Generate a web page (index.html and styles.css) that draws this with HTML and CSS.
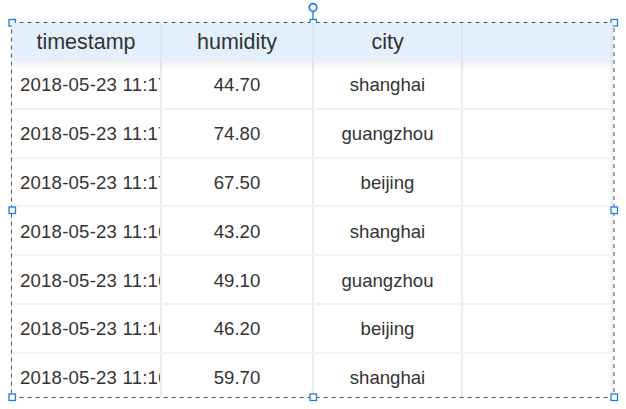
FILE: index.html
```html
<!DOCTYPE html>
<html>
<head>
<meta charset="utf-8">
<link rel="stylesheet" href="styles.css">
</head>
<body>
<div class="canvas">
  <div class="table">
    <div class="row head">
      <div class="cell">timestamp</div>
      <div class="cell">humidity</div>
      <div class="cell">city</div>
      <div class="cell"></div>
    </div>
    <div class="row">
      <div class="cell ts">2018-05-23 11:17:05</div>
      <div class="cell">44.70</div>
      <div class="cell">shanghai</div>
      <div class="cell"></div>
    </div>
    <div class="row">
      <div class="cell ts">2018-05-23 11:17:05</div>
      <div class="cell">74.80</div>
      <div class="cell">guangzhou</div>
      <div class="cell"></div>
    </div>
    <div class="row">
      <div class="cell ts">2018-05-23 11:17:05</div>
      <div class="cell">67.50</div>
      <div class="cell">beijing</div>
      <div class="cell"></div>
    </div>
    <div class="row">
      <div class="cell ts">2018-05-23 11:16:05</div>
      <div class="cell">43.20</div>
      <div class="cell">shanghai</div>
      <div class="cell"></div>
    </div>
    <div class="row">
      <div class="cell ts">2018-05-23 11:16:05</div>
      <div class="cell">49.10</div>
      <div class="cell">guangzhou</div>
      <div class="cell"></div>
    </div>
    <div class="row">
      <div class="cell ts">2018-05-23 11:16:05</div>
      <div class="cell">46.20</div>
      <div class="cell">beijing</div>
      <div class="cell"></div>
    </div>
    <div class="row">
      <div class="cell ts">2018-05-23 11:16:05</div>
      <div class="cell">59.70</div>
      <div class="cell">shanghai</div>
      <div class="cell"></div>
    </div>
  </div>
  <svg class="selection" width="626" height="409" viewBox="0 0 626 409">
    <rect x="11.5" y="22.5" width="602.5" height="375" fill="none" stroke="#555" stroke-width="1" stroke-dasharray="4 4"/>
    <line x1="313" y1="11.5" x2="313" y2="19.5" stroke="#64a2f2" stroke-width="2"/>
    <circle cx="313" cy="7.5" r="3.8" fill="#fff" stroke="#1a7cf0" stroke-width="1.7"/>
    <g fill="#fff" stroke="#1a7cf0" stroke-width="1.3">
      <rect x="9" y="19.5" width="6.5" height="6.5"/>
      <rect x="310" y="19.5" width="6.5" height="6.5"/>
      <rect x="611" y="19.5" width="6.5" height="6.5"/>
      <rect x="9" y="207" width="6.5" height="6.5"/>
      <rect x="611" y="207" width="6.5" height="6.5"/>
      <rect x="9" y="394" width="6.5" height="6.5"/>
      <rect x="310" y="394" width="6.5" height="6.5"/>
      <rect x="611" y="394" width="6.5" height="6.5"/>
    </g>
  </svg>
</div>
</body>
</html>
```
FILE: styles.css
```css
html, body {
  margin: 0;
  padding: 0;
  background: #fff;
}
.canvas {
  position: relative;
  width: 626px;
  height: 409px;
  padding: 23px 0 0 12px;
  box-sizing: border-box;
  overflow: hidden;
}
.table {
  width: 601px;
  height: 374px;
  overflow: hidden;
  font-family: "Liberation Sans", Arial, sans-serif;
  color: #333;
}
.row {
  display: grid;
  grid-template-columns: 150px 152px 149px 150px;
  height: 48.8px;
  box-sizing: border-box;
  border-bottom: 2px solid #f3f3f4;
  font-size: 18.6px;
}
.row .cell {
  padding-top: 2px;
}
.row.head {
  position: relative;
  z-index: 1;
  height: 38px;
  border-bottom: none;
  background: #e3f0fc;
  font-size: 21.5px;
  box-shadow: 0 4px 8px rgba(0, 0, 0, 0.07);
}
.row.head .cell {
  padding-top: 1px;
  border-right-color: #dbe7f3;
}
.cell {
  display: flex;
  align-items: center;
  justify-content: center;
  box-sizing: border-box;
  border-right: 2px solid #e8edf3;
  white-space: nowrap;
  overflow: hidden;
  min-width: 0;
}
.cell.ts {
  justify-content: flex-start;
  padding-left: 8px;
  letter-spacing: 0.2px;
}
.selection {
  position: absolute;
  left: 0;
  top: 0;
  pointer-events: none;
}
```
